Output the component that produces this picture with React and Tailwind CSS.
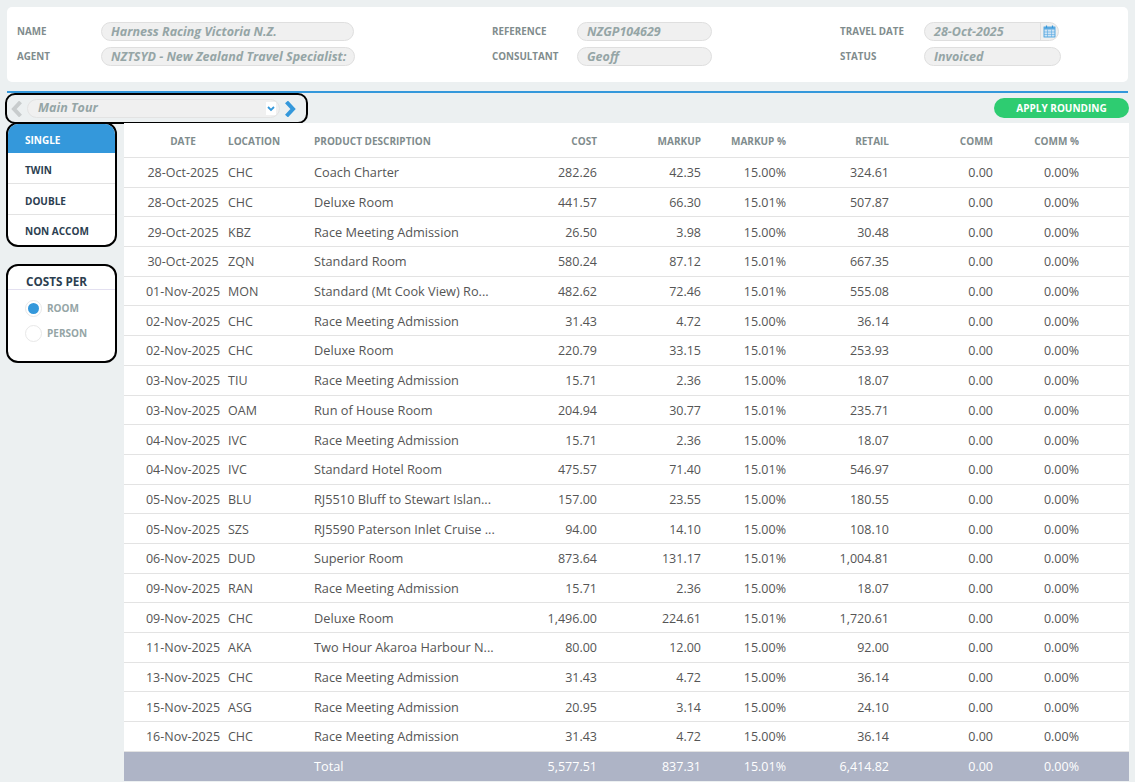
import React from 'react';

const rows = [
  ['28-Oct-2025', 'CHC', 'Coach Charter', '282.26', '42.35', '15.00%', '324.61'],
  ['28-Oct-2025', 'CHC', 'Deluxe Room', '441.57', '66.30', '15.01%', '507.87'],
  ['29-Oct-2025', 'KBZ', 'Race Meeting Admission', '26.50', '3.98', '15.00%', '30.48'],
  ['30-Oct-2025', 'ZQN', 'Standard Room', '580.24', '87.12', '15.01%', '667.35'],
  ['01-Nov-2025', 'MON', 'Standard (Mt Cook View) Ro...', '482.62', '72.46', '15.01%', '555.08'],
  ['02-Nov-2025', 'CHC', 'Race Meeting Admission', '31.43', '4.72', '15.00%', '36.14'],
  ['02-Nov-2025', 'CHC', 'Deluxe Room', '220.79', '33.15', '15.01%', '253.93'],
  ['03-Nov-2025', 'TIU', 'Race Meeting Admission', '15.71', '2.36', '15.00%', '18.07'],
  ['03-Nov-2025', 'OAM', 'Run of House Room', '204.94', '30.77', '15.01%', '235.71'],
  ['04-Nov-2025', 'IVC', 'Race Meeting Admission', '15.71', '2.36', '15.00%', '18.07'],
  ['04-Nov-2025', 'IVC', 'Standard Hotel Room', '475.57', '71.40', '15.01%', '546.97'],
  ['05-Nov-2025', 'BLU', 'RJ5510 Bluff to Stewart Islan...', '157.00', '23.55', '15.00%', '180.55'],
  ['05-Nov-2025', 'SZS', 'RJ5590 Paterson Inlet Cruise ...', '94.00', '14.10', '15.00%', '108.10'],
  ['06-Nov-2025', 'DUD', 'Superior Room', '873.64', '131.17', '15.01%', '1,004.81'],
  ['09-Nov-2025', 'RAN', 'Race Meeting Admission', '15.71', '2.36', '15.00%', '18.07'],
  ['09-Nov-2025', 'CHC', 'Deluxe Room', '1,496.00', '224.61', '15.01%', '1,720.61'],
  ['11-Nov-2025', 'AKA', 'Two Hour Akaroa Harbour N...', '80.00', '12.00', '15.00%', '92.00'],
  ['13-Nov-2025', 'CHC', 'Race Meeting Admission', '31.43', '4.72', '15.00%', '36.14'],
  ['15-Nov-2025', 'ASG', 'Race Meeting Admission', '20.95', '3.14', '15.00%', '24.10'],
  ['16-Nov-2025', 'CHC', 'Race Meeting Admission', '31.43', '4.72', '15.00%', '36.14'],
];

const gridCols = 'grid grid-cols-[104px_85px_184px_100px_104px_85px_103px_104px_86px_1fr] items-center';

const Field = ({ label, value, labelWidth, inputWidth, children }) => (
  <div className="flex items-center h-[19px]">
    <div className="text-[9.8px] leading-[14px] pt-px font-bold text-[#7f8c8d] shrink-0" style={{ width: labelWidth }}>{label}</div>
    <div
      className="h-[19px] rounded-full border border-[#dfdfdf] bg-[#f0f0f0] pl-[9px] text-[12.5px] leading-[17px] font-bold italic text-[#95a5a6] overflow-hidden whitespace-nowrap relative"
      style={{ width: inputWidth }}
    >
      {value}
      {children}
    </div>
  </div>
);

const CalendarIcon = () => (
  <div className="absolute right-0 top-0 h-full w-[18px] border-l border-[#dfdfdf] flex items-center justify-center">
    <svg width="13" height="13" viewBox="0 0 13 13">
      <rect x="1" y="2" width="11" height="10" fill="#cfe4f5" stroke="#3498db" strokeWidth="0.8" />
      <rect x="1" y="2" width="11" height="2.5" fill="#5aa9e0" />
      <path d="M3.5 0.5v2.5M9.5 0.5v2.5" stroke="#3498db" strokeWidth="1.2" />
      <path d="M1 7h11M1 9.5h11M4.5 4.5v7.5M8.5 4.5v7.5" stroke="#5aa9e0" strokeWidth="0.6" />
    </svg>
  </div>
);

const Chevron = ({ dir, color }) => (
  <svg width="13" height="16" viewBox="0 0 13 16" className="shrink-0">
    <path
      d={dir === 'left' ? 'M10.5 1 4 8l6.5 7' : 'M2.5 1 9 8l-6.5 7'}
      fill="none"
      stroke={color}
      strokeWidth="4"
    />
  </svg>
);

export default function App() {
  return (
    <div className="w-[1135px] h-[782px] overflow-hidden bg-[#ecf0f1] font-['Open_Sans',sans-serif] text-[#555]">
      {/* header card */}
      <div className="mx-[7px] mt-[7px] h-[75px] bg-white rounded-[5px] pl-[10px] pt-[15px] flex">
        <div className="w-[475px] flex flex-col gap-[6px]">
          <Field label="NAME" value="Harness Racing Victoria N.Z." labelWidth="84px" inputWidth="253px" />
          <Field label="AGENT" value="NZTSYD - New Zealand Travel Specialist:" labelWidth="84px" inputWidth="254px" />
        </div>
        <div className="w-[348px] flex flex-col gap-[6px]">
          <Field label="REFERENCE" value="NZGP104629" labelWidth="85px" inputWidth="135px" />
          <Field label="CONSULTANT" value="Geoff" labelWidth="85px" inputWidth="135px" />
        </div>
        <div className="flex flex-col gap-[6px]">
          <Field label="TRAVEL DATE" value="28-Oct-2025" labelWidth="84px" inputWidth="135px">
            <CalendarIcon />
          </Field>
          <Field label="STATUS" value="Invoiced" labelWidth="84px" inputWidth="137px" />
        </div>
      </div>

      <div className="mt-[9px] mx-[7px] h-[2px] bg-[#3498db]" />

      {/* tour selector + rounding */}
      <div className="h-[30px] flex items-start justify-between pl-[5px] pr-[6px]">
        <div className="w-[303px] h-[31px] border-2 border-black rounded-[10px] flex items-center pl-[3px] gap-[4px]">
          <Chevron dir="left" color="#c8cccd" />
          <div className="w-[253px] h-[19px] rounded-full border border-[#e3e3e3] bg-[#f0f0f0] pl-[10px] pr-[3px] flex items-center justify-between text-[12.5px] leading-[15px] font-bold italic text-[#95a5a6]">
            <span className="-mt-[2px]">Main Tour</span>
            <span className="w-[10px] h-[13px] bg-white flex items-center justify-center">
              <svg width="8" height="6" viewBox="0 0 8 6">
                <path d="M1 1l3 3 3-3" fill="none" stroke="#3498db" strokeWidth="1.8" />
              </svg>
            </span>
          </div>
          <Chevron dir="right" color="#3498db" />
        </div>
        <button className="mt-[5px] w-[135px] h-[20px] rounded-full bg-[#2ecc71] text-white text-[10px] font-bold">
          APPLY ROUNDING
        </button>
      </div>

      <div className="flex pl-[6px] pr-[6px]">
        {/* left menus */}
        <div className="w-[118px] shrink-0">
          <div className="w-[111px] h-[125px] -mt-px border-2 border-black rounded-[12px] overflow-hidden bg-white text-[10px] font-bold text-[#2c3e50]">
            <div className="h-[29px] bg-[#3498db] text-white flex items-center pl-[17px] pt-[3px]">SINGLE</div>
            <div className="h-[31px] border-b border-[#e3e3e3] flex items-center pl-[17px] pt-[4px]">TWIN</div>
            <div className="h-[31px] border-b border-[#e3e3e3] flex items-center pl-[17px] pt-[4px]">DOUBLE</div>
            <div className="h-[30px] flex items-center pl-[17px] pt-[3px]">NON ACCOM</div>
          </div>
          <div className="mt-[17px] w-[111px] h-[99px] border-2 border-black rounded-[12px] bg-white">
            <div className="h-[24px] border-b border-[#e3e0f0] pl-[18px] pt-[7px] text-[11.7px] leading-[16px] font-bold text-[#2c3e50]">COSTS PER</div>
            <div className="pl-[17px] pt-[10px] flex flex-col gap-[8px] text-[10px] font-bold text-[#95a5a6]">
              <div className="flex items-center gap-[5px] h-[17px]">
                <span className="w-[17px] h-[17px] rounded-full border border-[#e8e8e8] flex items-center justify-center">
                  <span className="w-[11px] h-[11px] rounded-full bg-[#3498db]" />
                </span>
                ROOM
              </div>
              <div className="flex items-center gap-[5px] h-[17px]">
                <span className="w-[17px] h-[17px] rounded-full border border-[#e8e8e8]" />
                PERSON
              </div>
            </div>
          </div>
        </div>

        {/* table */}
        <div className="flex-1 bg-white">
          <div className={`${gridCols} h-[35px] border-b border-[#e3e3e3] text-[10px] font-bold text-[#7f8c8d] pt-[2px]`}>
            <div className="pl-[19px] pr-[5px] text-center">DATE</div>
            <div>LOCATION</div>
            <div className="pl-px">PRODUCT DESCRIPTION</div>
            <div className="text-right">COST</div>
            <div className="text-right">MARKUP</div>
            <div className="text-right">MARKUP %</div>
            <div className="text-right">RETAIL</div>
            <div className="text-right">COMM</div>
            <div className="text-right">COMM %</div>
          </div>
          {rows.map((r, i) => (
            <div key={i} className={`${gridCols} h-[29.7px] border-b border-[#e3e3e3] text-[12.5px] leading-[18px] text-[#555] pt-[2px]`}>
              <div className="pl-[19px] pr-[5px] text-center whitespace-nowrap">{r[0]}</div>
              <div>{r[1]}</div>
              <div className="pl-px text-[12.75px] leading-[18px] -mt-[2px] whitespace-nowrap overflow-hidden">{r[2]}</div>
              <div className="text-right">{r[3]}</div>
              <div className="text-right">{r[4]}</div>
              <div className="text-right">{r[5]}</div>
              <div className="text-right">{r[6]}</div>
              <div className="text-right">0.00</div>
              <div className="text-right">0.00%</div>
            </div>
          ))}
          <div className={`${gridCols} h-[29px] bg-[#aeb4c6] text-[12.5px] leading-[18px] text-white pt-[2px]`}>
            <div />
            <div />
            <div className="pl-px text-[12.75px] leading-[18px] -mt-[2px]">Total</div>
            <div className="text-right">5,577.51</div>
            <div className="text-right">837.31</div>
            <div className="text-right">15.01%</div>
            <div className="text-right">6,414.82</div>
            <div className="text-right">0.00</div>
            <div className="text-right">0.00%</div>
          </div>
        </div>
      </div>
    </div>
  );
}
